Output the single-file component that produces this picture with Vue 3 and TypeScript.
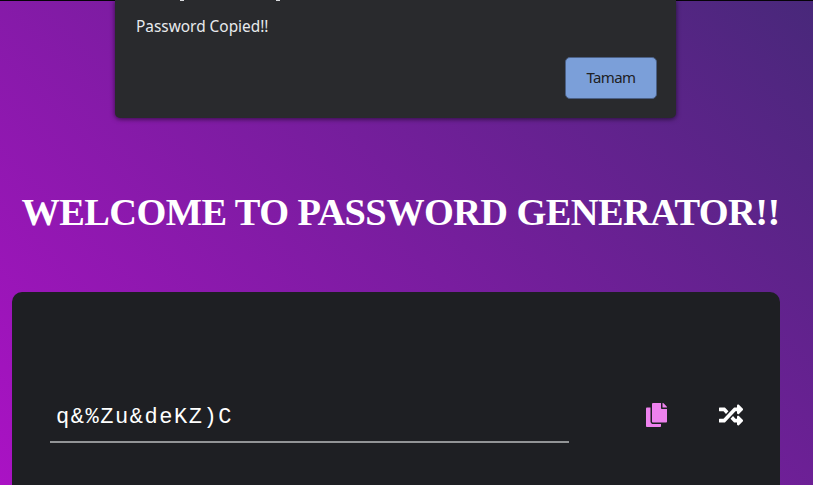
<script setup lang="ts">
import { ref } from 'vue'

const password = ref<string>('q&%Zu&deKZ)C')
const message = ref<string>('Password Copied!!')
</script>

<template>
  <div class="page">
    <div class="dialog" role="alertdialog">
      <p class="message">{{ message }}</p>
      <button class="confirm" type="button">Tamam</button>
      <i class="tail first"></i>
      <i class="tail second"></i>
    </div>
    <h1 class="title">WELCOME TO PASSWORD GENERATOR!!</h1>
    <main class="card">
      <div class="field">{{ password }}</div>
      <svg class="icon copy" viewBox="0 0 448 512" aria-hidden="true">
        <path d="M320 448v40c0 13.255-10.745 24-24 24H24c-13.255 0-24-10.745-24-24V120c0-13.255 10.745-24 24-24h72v296c0 30.879 25.121 56 56 56h168zm0-344V0H152c-13.255 0-24 10.745-24 24v368c0 13.255 10.745 24 24 24h272c13.255 0 24-10.745 24-24V128H344c-13.2 0-24-10.8-24-24zm120.971-31.029L375.029 7.029A24 24 0 0 0 358.059 0H352v96h96v-6.059a24 24 0 0 0-7.029-16.97z" />
      </svg>
      <svg class="icon shuffle" viewBox="0 0 512 512" aria-hidden="true">
        <path d="M504.971 359.029c9.373 9.373 9.373 24.569 0 33.941l-80 79.984c-15.01 15.01-40.971 4.49-40.971-16.971V416h-58.785a12.004 12.004 0 0 1-8.773-3.812l-70.556-75.596 53.333-57.143L352 336h32v-39.981c0-21.438 25.943-31.998 40.971-16.971l80 79.981zM12 176h84l52.781 56.551 53.333-57.143-70.556-75.596A11.999 11.999 0 0 0 122.785 96H12c-6.627 0-12 5.373-12 12v56c0 6.627 5.373 12 12 12zm372 0v39.984c0 21.46 25.961 31.98 40.971 16.971l80-79.984c9.373-9.373 9.373-24.569 0-33.941l-80-79.981C409.943 24.021 384 34.582 384 56.019V96h-58.785a12.004 12.004 0 0 0-8.773 3.812L96 336H12c-6.627 0-12 5.373-12 12v56c0 6.627 5.373 12 12 12h110.785c3.326 0 6.503-1.381 8.773-3.812L352 176h32z" />
      </svg>
    </main>
  </div>
</template>

<style>
body {
  margin: 0;
  overflow: hidden;
}
</style>

<style scoped>
.page {
  width: 100vw;
  height: 100vh;
  overflow: hidden;
  background:
    linear-gradient(#050308, #050308) top / 100% 1px no-repeat,
    linear-gradient(45deg, #aa12c4, #48287a);
  display: flex;
  flex-direction: column;
}

.dialog {
  position: relative;
  box-sizing: border-box;
  flex: none;
  width: 561px;
  height: 118px;
  margin-left: 115px;
  padding: 16px 19px 19px 21px;
  border-radius: 0 0 5px 5px;
  background: #292a2d;
  box-shadow: 0 1px 5px rgba(0, 0, 0, 0.6);
  display: flex;
  flex-direction: column;
  justify-content: space-between;
}

.message {
  margin: 0;
  font: 15.4px/22px "Noto Sans", sans-serif;
  color: #e8eaed;
}

.confirm {
  align-self: flex-end;
  box-sizing: border-box;
  width: 92px;
  height: 42px;
  padding: 0 0 3px;
  border: 1px solid #4b6085;
  border-radius: 5px;
  background: #7b9fd9;
  color: #202124;
  font: 15px/20px "Noto Sans", sans-serif;
  letter-spacing: -0.6px;
}

/* Descenders of the clipped heading line */
.tail {
  position: absolute;
  top: 0;
  width: 4px;
  height: 1px;
  background: #d8dadd;
}

.first {
  left: 65px;
}

.second {
  left: 161px;
}

.title {
  margin: 71px 0 0 21.5px;
  font: bold 38.4px/46px "Liberation Serif", serif;
  letter-spacing: -0.58px;
  color: #fff;
  white-space: nowrap;
}

.card {
  box-sizing: border-box;
  flex: none;
  width: 768px;
  height: 260px;
  margin: 56.5px 0 0 12px;
  padding: 98.5px 36px 0 38px;
  border-radius: 10px;
  background: #1e1f23;
  display: flex;
  align-items: flex-start;
}

.field {
  box-sizing: border-box;
  width: 519px;
  height: 53px;
  padding: 0 6px;
  border-bottom: 2px solid #929496;
  color: #fff;
  font: 22px/56px "Courier New", "Liberation Mono", monospace;
  letter-spacing: 1.55px;
}

.icon {
  flex: none;
  height: 24px;
  margin-top: 12.6px;
}

.copy {
  width: 21px;
  margin-left: 77px;
  fill: #ee82ee;
}

.shuffle {
  width: 24px;
  margin-left: 52.4px;
  fill: #fff;
}
</style>
